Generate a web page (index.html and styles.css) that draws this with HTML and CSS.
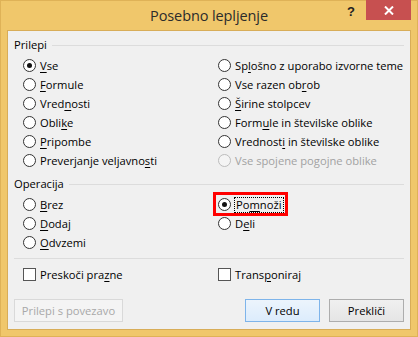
FILE: index.html
```html
<!DOCTYPE html>
<html lang="sl">
<head>
<meta charset="utf-8">
<title>Posebno lepljenje</title>
<link rel="stylesheet" href="styles.css">
</head>
<body>
<div class="window">
  <div class="titlebar">
    <div></div>
    <div class="title">Posebno lepljenje</div>
    <div class="controls">
      <span class="help">?</span>
      <span class="close"><svg width="10" height="9" viewBox="0 0 10 9"><path d="M1 0.5 L9 8.5 M9 0.5 L1 8.5" stroke="#fff" stroke-width="2"/></svg></span>
    </div>
  </div>
  <div class="client">
    <div class="legend"><span>Prilepi</span><i></i></div>
    <div class="grid">
      <label class="opt"><input type="radio" name="p" checked><span><u>V</u>se</span></label>
      <label class="opt"><input type="radio" name="p"><span>Sp<u>l</u>ošno z uporabo izvorne teme</span></label>
      <label class="opt"><input type="radio" name="p"><span><u>F</u>ormule</span></label>
      <label class="opt"><input type="radio" name="p"><span>Vse razen ob<u>r</u>ob</span></label>
      <label class="opt"><input type="radio" name="p"><span>Vred<u>n</u>osti</span></label>
      <label class="opt"><input type="radio" name="p"><span><u>Š</u>irine stolpcev</span></label>
      <label class="opt"><input type="radio" name="p"><span>Obli<u>k</u>e</span></label>
      <label class="opt"><input type="radio" name="p"><span>Form<u>u</u>le in številske oblike</span></label>
      <label class="opt"><input type="radio" name="p"><span><u>P</u>ripombe</span></label>
      <label class="opt"><input type="radio" name="p"><span>Vrednost<u>i</u> in številske oblike</span></label>
      <label class="opt"><input type="radio" name="p"><span>Preverjanje veljavno<u>s</u>ti</span></label>
      <label class="opt disabled"><input type="radio" name="p" disabled><span>Vse spojene pogojne oblike</span></label>
    </div>
    <div class="legend op"><span>Operacija</span><i></i></div>
    <div class="grid">
      <label class="opt"><input type="radio" name="o"><span><u>B</u>rez</span></label>
      <label class="opt marked"><input type="radio" name="o" checked><span class="focus">Po<u>m</u>noži</span></label>
      <label class="opt"><input type="radio" name="o"><span><u>D</u>odaj</span></label>
      <label class="opt"><input type="radio" name="o"><span>D<u>e</u>li</span></label>
      <label class="opt"><input type="radio" name="o"><span><u>O</u>dvzemi</span></label>
    </div>
    <div class="sep"></div>
    <div class="grid checks">
      <label class="opt"><input type="checkbox"><span>Preskoči pra<u>z</u>ne</span></label>
      <label class="opt"><input type="checkbox"><span>Trans<u>p</u>oniraj</span></label>
    </div>
    <div class="buttons">
      <button class="btn link" disabled>Prilepi s povezavo</button>
      <button class="btn default">V redu</button>
      <button class="btn">Prekliči</button>
    </div>
  </div>
</div>
</body>
</html>
```
FILE: styles.css
```css
html, body {
  margin: 0;
  padding: 0;
}
body {
  font-family: "Open Sans", "Noto Sans", sans-serif;
  font-size: 11.2px;
  color: #000;
  background: #f0c76b;
}
.window {
  width: 418px;
  height: 337px;
  box-sizing: border-box;
  border: 1px solid #dfb257;
  background: #f0c76b;
  padding: 0 6px 6px;
  display: flex;
  flex-direction: column;
}
.titlebar {
  height: 29px;
  flex: none;
  display: grid;
  grid-template-columns: 1fr auto 1fr;
  align-items: start;
}
.title {
  font-size: 14.5px;
  line-height: 30px;
  color: #2b2b2b;
  letter-spacing: -0.1px;
}
.controls {
  justify-self: end;
  display: flex;
  align-items: flex-start;
  margin-top: -1px;
}
.help {
  font-family: "Liberation Sans", sans-serif;
  font-weight: bold;
  font-size: 13px;
  line-height: 13px;
  color: #222;
  margin-top: 5px;
  margin-right: 11px;
}
.close {
  width: 45px;
  height: 20px;
  background: #c75050;
  display: flex;
  align-items: center;
  justify-content: center;
}
.client {
  flex: 1;
  background: #f0f0f0;
  border: 1px solid #d8ad58;
  padding: 6px 6px 7px 6px;
  display: flex;
  flex-direction: column;
}
.legend {
  height: 16px;
  display: flex;
  align-items: center;
  line-height: 16px;
}
.legend i {
  flex: 1;
  height: 1px;
  background: #dcdcdc;
  margin-left: 5px;
}
.legend.op {
  margin-top: 6px;
}
.grid {
  display: grid;
  grid-template-columns: 195px 1fr;
  grid-auto-rows: 19px;
  margin: 3px 0 0 9px;
}
.opt {
  display: flex;
  align-items: center;
  gap: 4px;
  white-space: nowrap;
  justify-self: start;
}
.opt u {
  text-decoration-thickness: 1px;
  text-underline-offset: 2px;
}
.opt input {
  appearance: none;
  -webkit-appearance: none;
  margin: 0;
  width: 13px;
  height: 13px;
  box-sizing: border-box;
  border: 1px solid #333;
  background: #fff;
  flex: none;
}
.opt input[type="radio"] {
  border-radius: 50%;
  display: grid;
  place-items: center;
}
.opt input[type="radio"]:checked::before {
  content: "";
  width: 5px;
  height: 5px;
  border-radius: 50%;
  background: #111;
}
.opt input[type="checkbox"] {
  border-color: #555;
}
.opt.disabled {
  color: #a2a2a2;
}
.opt.disabled input {
  border-color: #bcbcbc;
  background: #f4f4f4;
}
.marked {
  position: relative;
}
.marked::after {
  content: "";
  position: absolute;
  left: -5px;
  right: -5px;
  top: -3px;
  bottom: -2px;
  border: 3px solid #f00;
}
.focus {
  outline: 1px dotted #000;
  outline-offset: 0;
  padding: 0 1px;
  line-height: 14px;
}
.sep {
  height: 1px;
  background: #dcdcdc;
  margin-top: 6px;
}
.grid.checks {
  margin-top: 6px;
}
.buttons {
  margin-top: auto;
  display: flex;
  gap: 9px;
}
.btn {
  height: 23px;
  width: 75px;
  box-sizing: border-box;
  font: inherit;
  color: #000;
  border: 1px solid #adadad;
  background: linear-gradient(#f0f0f0, #e5e5e5);
  padding: 0;
}
.btn.link {
  width: 109px;
  margin-right: auto;
  color: #a8a8a8;
  border-color: #d9d9d9;
  background: #f4f4f4;
}
.btn.default {
  border-color: #7eb4ea;
  background: linear-gradient(#ecf4fc, #dcecfc);
}
```
